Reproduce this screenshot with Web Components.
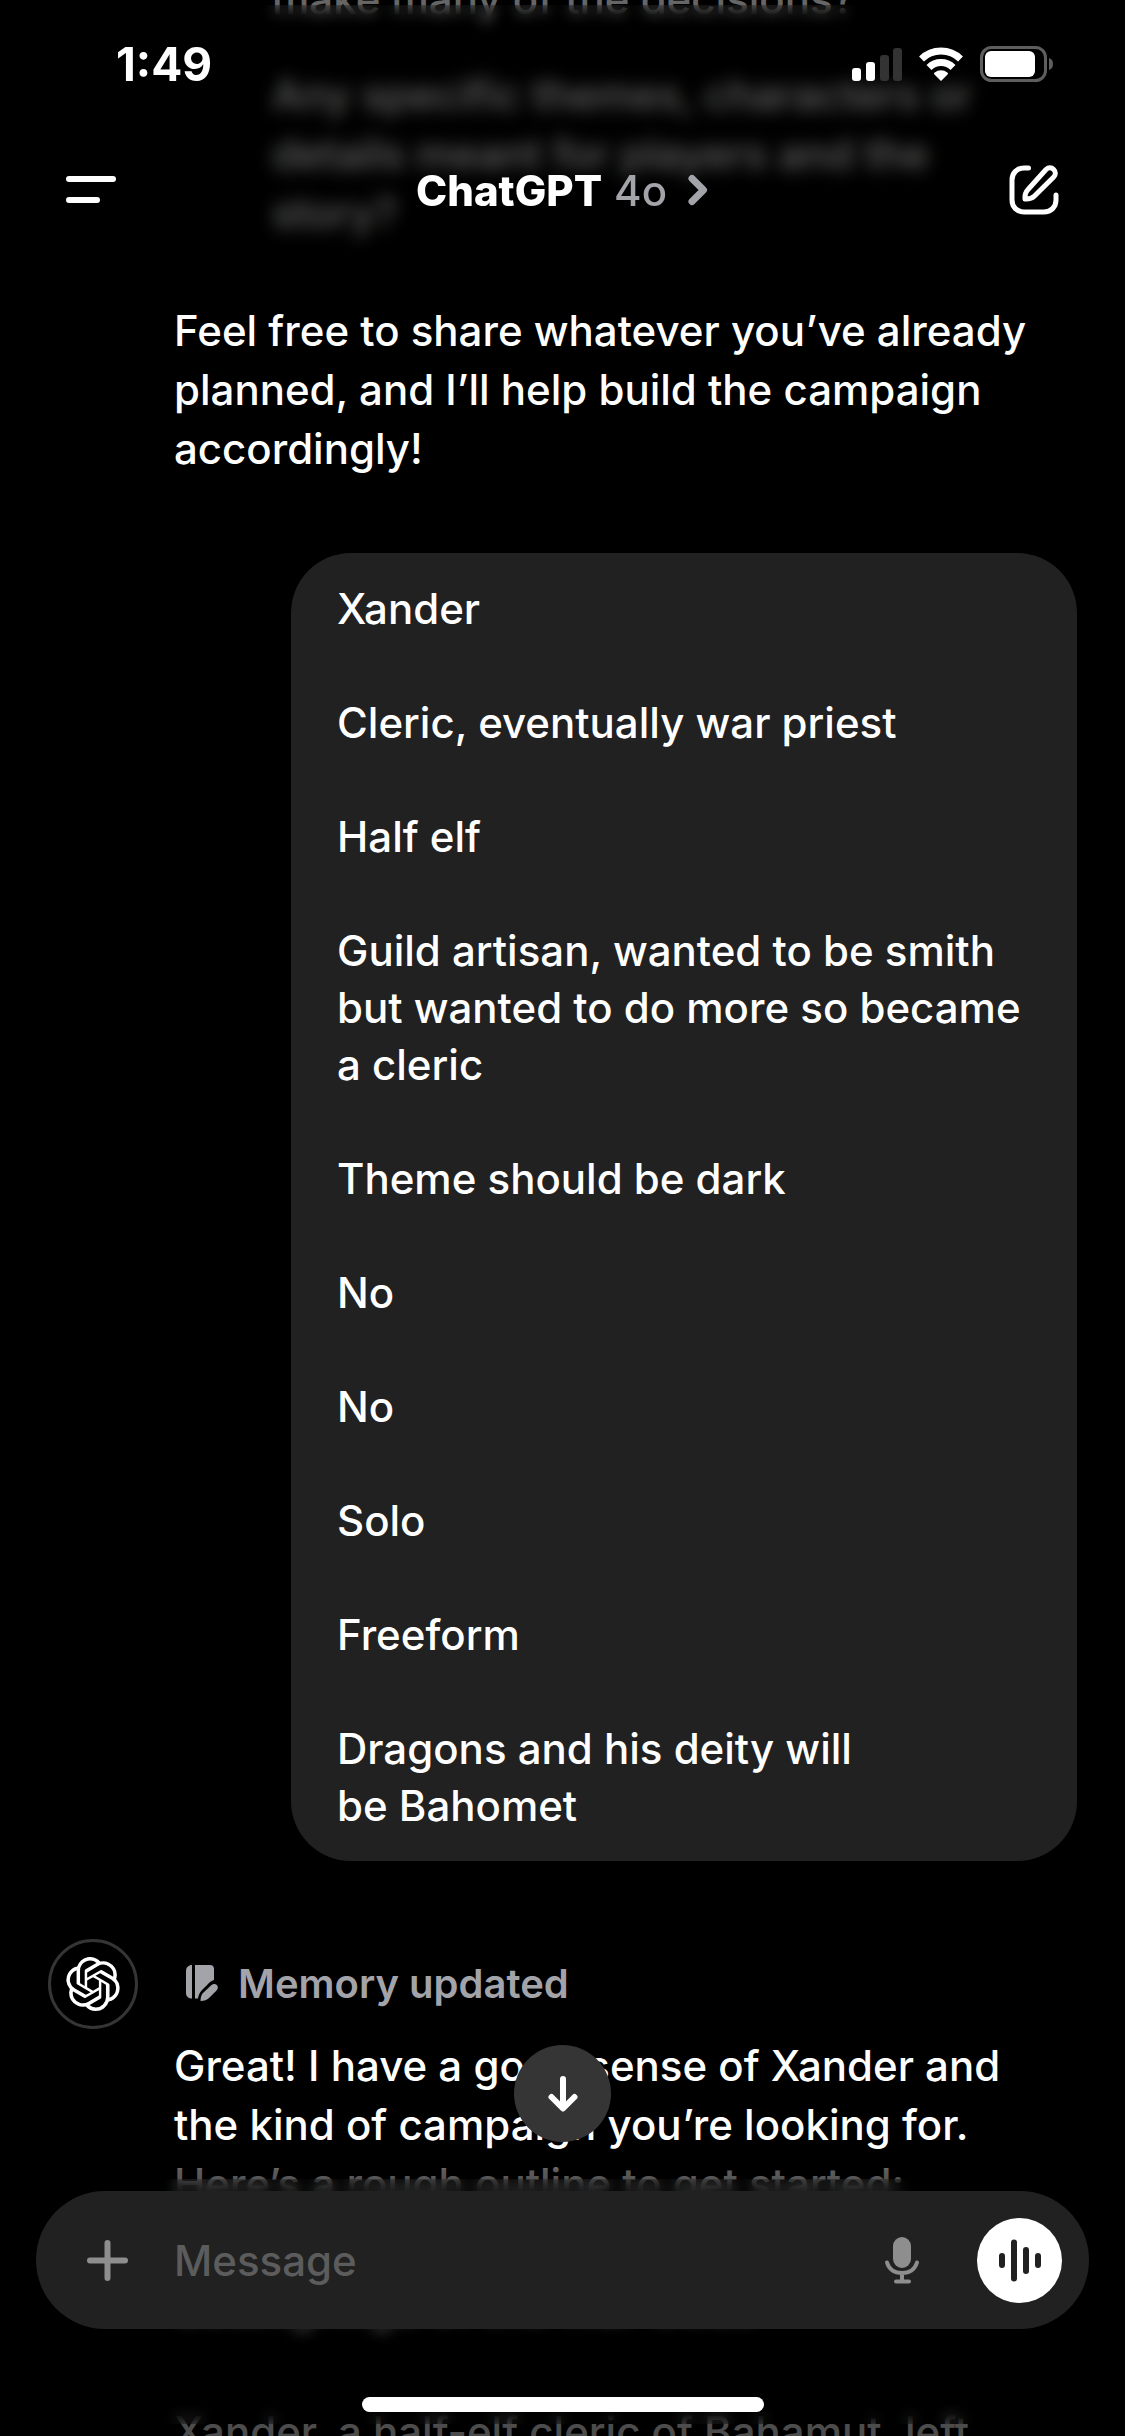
<!DOCTYPE html>
<html lang="en">
<head>
<meta charset="utf-8">
<meta name="viewport" content="width=device-width, initial-scale=1">
<title>ChatGPT</title>
<style>
  html, body { margin: 0; height: 100%; background: #000; }
  body {
    overflow: hidden;
    color: #fff;
    font: 500 42px/59px Inter, "Liberation Sans", sans-serif;
  }
</style>
</head>
<body>
<chat-app>
  <status-bar slot="top" time="1:49"></status-bar>
  <nav-bar slot="top" name="ChatGPT" model="4o"></nav-bar>

  <assistant-message>
    <question-list>
      <li>make many of the decisions?</li>
      <li>Any specific themes, characters or details meant for players and the story?</li>
    </question-list>
    <text-block>Feel free to share whatever you’ve already planned, and I’ll help build the campaign accordingly!</text-block>
  </assistant-message>

  <user-message>
    <p>Xander</p>
    <p>Cleric, eventually war priest</p>
    <p>Half elf</p>
    <p>Guild artisan, wanted to be smith but wanted to do more so became a&nbsp;cleric</p>
    <p>Theme should be dark</p>
    <p>No</p>
    <p>No</p>
    <p>Solo</p>
    <p>Freeform</p>
    <p>Dragons and his deity will <br>be Bahomet</p>
  </user-message>

  <assistant-message avatar>
    <memory-note slot="note">Memory updated</memory-note>
    <text-block>Great! I have a good sense of Xander and the kind of campaign you’re looking for. Here’s a rough outline to get started:</text-block>
    <text-block>Setting: Age of the War Gods</text-block>
    <text-block>Xander, a half-elf cleric of Bahamut, left</text-block>
  </assistant-message>

  <scroll-down slot="float"></scroll-down>
  <message-composer slot="bottom" placeholder="Message"></message-composer>
  <home-indicator slot="bottom"></home-indicator>
</chat-app>

<script>
const define = (name, render) => customElements.define(name, class extends HTMLElement {
  constructor() {
    super();
    this.attachShadow({ mode: 'open' });
  }
  connectedCallback() {
    this.shadowRoot.innerHTML = render(this);
  }
});

const buttonReset = `
  button { all: unset; box-sizing: border-box; display: grid; place-items: center; cursor: pointer; }
  button:focus-visible { outline: 4px solid #6aa8ff; }
  svg { display: block; }`;

define('chat-app', () => `
  <style>
    :host { display: block; position: relative; height: 100vh; overflow: hidden; background: #000; }
    main { display: flex; flex-direction: column; gap: 75px; margin-top: -31px; }
    header { position: absolute; inset: 0 0 auto; }
    footer { position: absolute; inset: auto 0 0; }
    .veil { position: absolute; inset: 0; background: rgba(0, 0, 0, .6); }
    footer .veil { background: linear-gradient(transparent, rgba(0, 0, 0, .64) 20px, rgba(0, 0, 0, .7) 40px); }
    .soft { position: absolute; inset: 5px 0 0; backdrop-filter: blur(7px); }
    .softer { position: absolute; inset: 60px 0 0; backdrop-filter: blur(6px); }
    footer .soft { inset: 29px 0 12px; }
    .bars { position: relative; }
    footer .bars { padding-top: 41px; }
    .float { position: absolute; z-index: 1; inset: auto 0 100%; display: flex; justify-content: center; padding-bottom: 8px; }
  </style>
  <main><slot></slot></main>
  <header><div class="soft"></div><div class="softer"></div><div class="veil"></div><div class="bars"><slot name="top"></slot></div></header>
  <footer><div class="soft"></div><div class="veil"></div><div class="float"><slot name="float"></slot></div><div class="bars"><slot name="bottom"></slot></div></footer>`);

define('status-bar', el => `
  <style>
    :host { display: flex; align-items: center; justify-content: space-between; height: 128px; padding: 0 72px 0 116px; }
    time { font-size: 46px; font-weight: 700; }
    .signs { display: flex; align-items: center; gap: 16px; }
    svg { display: block; }
  </style>
  <time>${el.getAttribute('time')}</time>
  <div class="signs">
    <svg width="52" height="34" viewBox="0 0 52 34" role="img" aria-label="Signal">
      <g fill="#fff"><rect x="2" y="21" width="9" height="13" rx="3"/><rect x="16" y="15" width="9" height="19" rx="3"/></g>
      <g fill="#333"><rect x="30" y="8" width="9" height="26" rx="3"/><rect x="43" y="1" width="9" height="33" rx="3"/></g>
    </svg>
    <svg width="46" height="34" viewBox="0 0 46 34" role="img" aria-label="Wi-Fi">
      <path fill="none" stroke="#fff" stroke-width="7" d="M3.500 12a28 28 0 0 1 39 0M11 20.500a17 17 0 0 1 24 0"/>
      <path fill="#fff" d="M23 34l-6.500-6.500c-.8-.8-.6-1.600.2-2.100a10.500 10.500 0 0 1 12.600 0c.8.5 1 1.300.2 2.100z"/>
    </svg>
    <svg width="73" height="36" viewBox="0 0 73 36" role="img" aria-label="Battery">
      <rect x="1.500" y="1.500" width="64" height="33" rx="10" fill="none" stroke="#5e5e5e" stroke-width="3"/>
      <rect x="5" y="5" width="50" height="26" rx="6" fill="#fff"/>
      <path d="M69 12c3 1 4 3 4 6s-1 5-4 6z" fill="#5e5e5e"/>
    </svg>
  </div>`);

define('nav-bar', el => `
  <style>
    ${buttonReset}
    :host { display: grid; grid-template-columns: 1fr auto 1fr; align-items: center; height: 124px; padding: 0 66px; }
    .menu { justify-self: start; }
    .title { display: flex; align-items: center; gap: 12px; font-weight: 800; }
    .title span { color: #a3a3aa; font-weight: 500; }
    .title svg { margin-left: 8px; }
    .new { justify-self: end; }
  </style>
  <button class="menu" aria-label="Menu">
    <svg width="50" height="30" viewBox="0 0 50 30" stroke="#fff" stroke-width="6" stroke-linecap="round"><path d="M3 4h44M3 25h28"/></svg>
  </button>
  <button class="title">${el.getAttribute('name')} <span>${el.getAttribute('model')}</span>
    <svg width="22" height="32" viewBox="0 0 22 32" fill="none" stroke="#a3a3aa" stroke-width="7" stroke-linecap="round" stroke-linejoin="round"><path d="M5 4.500L16.500 16 5 27.500"/></svg>
  </button>
  <button class="new" aria-label="New chat">
    <svg width="50" height="50" viewBox="0 0 50 50" fill="none" stroke="#fff" stroke-width="5" stroke-linecap="round" stroke-linejoin="round">
      <path d="M19.500 3H15C8 3 3 8 3 15v20c0 7 5 12 12 12h20c7 0 12-5 12-12v-5"/>
      <path d="M37 4.500c2.500-2.300 5.500-2.200 7.700 0s2.200 5.200 0 7.500L25.500 31c-2 2-5 3.300-9.500 3 -.3-4.500 1-7.500 3-9.500z"/>
    </svg>
  </button>`);

define('question-list', () => `
  <style>
    :host { display: block; padding: 0 40px 0 98px; }
    ul { display: flex; flex-direction: column; gap: 37px; margin: 0; padding: 0; list-style: none; }
  </style>
  <ul><slot></slot></ul>`);

define('text-block', () => `
  <style>:host { display: block; }</style>
  <slot></slot>`);

define('assistant-message', el => `
  <style>
    :host { display: grid; grid-template-columns: 90px minmax(0, 1fr); column-gap: 36px; padding: 0 72px 0 48px; }
    .avatar { display: grid; place-items: center; box-sizing: border-box; width: 90px; height: 90px; margin-top: 3px; border: 3px solid #353535; border-radius: 50%; }
    .body { display: flex; flex-direction: column; gap: 59px; grid-column: 2; }
    :host([avatar]) .note { box-sizing: border-box; height: 100px; padding-bottom: 6px; display: flex; align-items: center; }
    :host([avatar]) .body { gap: 65px; }
  </style>
  ${el.hasAttribute('avatar') ? `
  <div class="avatar">
    <svg width="54" height="54" viewBox="0 0 24 24" fill="#fff" role="img" aria-label="ChatGPT"><path d="M22.2819 9.8211a5.9847 5.9847 0 0 0-.5157-4.9108 6.0462 6.0462 0 0 0-6.5098-2.9A6.0651 6.0651 0 0 0 4.9807 4.1818a5.9847 5.9847 0 0 0-3.9977 2.9 6.0462 6.0462 0 0 0 .7427 7.0966 5.98 5.98 0 0 0 .511 4.9107 6.051 6.051 0 0 0 6.5146 2.9001A5.9847 5.9847 0 0 0 13.2599 24a6.0557 6.0557 0 0 0 5.7718-4.2058 5.9894 5.9894 0 0 0 3.9977-2.9001 6.0557 6.0557 0 0 0-.7475-7.0729zm-9.022 12.6081a4.4755 4.4755 0 0 1-2.8764-1.0408l.1419-.0804 4.7783-2.7582a.7948.7948 0 0 0 .3927-.6813v-6.7369l2.02 1.1686a.071.071 0 0 1 .038.052v5.5826a4.504 4.504 0 0 1-4.4945 4.4944zm-9.6607-4.1254a4.4708 4.4708 0 0 1-.5346-3.0137l.142.0852 4.783 2.7582a.7712.7712 0 0 0 .7806 0l5.8428-3.3685v2.3324a.0804.0804 0 0 1-.0332.0615L9.74 19.9502a4.4992 4.4992 0 0 1-6.1408-1.6464zM2.3408 7.8956a4.485 4.485 0 0 1 2.3655-1.9728V11.6a.7664.7664 0 0 0 .3879.6765l5.8144 3.3543-2.0201 1.1685a.0757.0757 0 0 1-.071 0l-4.8303-2.7865A4.504 4.504 0 0 1 2.3408 7.872zm16.5963 3.8558L13.1038 8.364 15.1192 7.2a.0757.0757 0 0 1 .071 0l4.8303 2.7913a4.4944 4.4944 0 0 1-.6765 8.1042v-5.6772a.79.79 0 0 0-.407-.667zm2.0107-3.0231l-.142-.0852-4.7735-2.7818a.7759.7759 0 0 0-.7854 0L9.409 9.2297V6.8974a.0662.0662 0 0 1 .0284-.0615l4.8303-2.7866a4.4992 4.4992 0 0 1 6.6802 4.66zM8.3065 12.863l-2.02-1.1638a.0804.0804 0 0 1-.038-.0567V6.0742a4.4992 4.4992 0 0 1 7.3757-3.4537l-.142.0805L8.704 5.459a.7948.7948 0 0 0-.3927.6813zm1.0976-2.3654l2.602-1.4998 2.6069 1.4998v2.9994l-2.5974 1.4997-2.6067-1.4997Z"/></svg>
  </div>
  <div class="note"><slot name="note"></slot></div>` : ''}
  <div class="body"><slot></slot></div>`);

define('user-message', () => `
  <style>
    :host { display: flex; flex-direction: column; gap: 57px; margin: 0 48px 0 291px; padding: 27px 46px; border-radius: 60px; background: #212121; line-height: 57px; }
    ::slotted(p) { margin: 0; }
  </style>
  <slot></slot>`);

define('memory-note', () => `
  <style>
    :host { display: flex; align-items: center; gap: 18px; padding-left: 12px; color: #a3a3aa; font-size: 40px; font-weight: 600; }
    svg { display: block; }
  </style>
  <svg width="34" height="36" viewBox="0 0 34 36" fill="#a3a3aa" aria-hidden="true">
    <path d="M6 0v33.500C2.500 33.500 0 31.500 0 28V6C0 2.500 2.500 0 6 0z"/>
    <path d="M9 0h15c2.500 0 4 1.500 4 4v11c-2 .5-3.500 1.500-5 3l-7 7c-2.500 2.500-3.500 5-4 8.500H9z"/>
    <path d="M25 20.500c2-2 4.300-2 5.800-.5s1.500 3.800-.5 5.800L23 33c-2 2-4.500 3-8.500 3 0-4 1-6.500 3-8.500z"/>
  </svg>
  <slot></slot>`);

define('scroll-down', () => `
  <style>
    ${buttonReset}
    :host { display: block; }
    button { width: 97px; height: 97px; border-radius: 50%; background: #353535; }
  </style>
  <button aria-label="Scroll to bottom">
    <svg width="36" height="40" viewBox="0 0 36 40" fill="none" stroke="#fff" stroke-width="6" stroke-linecap="round" stroke-linejoin="round"><path d="M18 5v29M6.500 23L18 34.500 29.500 23"/></svg>
  </button>`);

define('message-composer', el => `
  <style>
    ${buttonReset}
    :host { display: block; padding: 0 36px; }
    form { display: flex; align-items: center; box-sizing: border-box; height: 138px; margin: 0; padding: 0 27px 0 50px; border-radius: 69px; background: #212121; }
    input { flex: 1; min-width: 0; height: 59px; margin: 0 40px 0 45px; padding: 0; border: 0; outline: 0; background: none; color: #fff; font: inherit; }
    input::placeholder { color: #5c5c5c; opacity: 1; }
    .voice { width: 85px; height: 85px; margin-left: 57px; border-radius: 50%; background: #fff; }
  </style>
  <form>
    <button type="button" aria-label="Add">
      <svg width="43" height="43" viewBox="0 0 43 43" stroke="#8e8e8e" stroke-width="6" stroke-linecap="round"><path d="M21.500 4v35M4 21.500h35"/></svg>
    </button>
    <input type="text" aria-label="Message" placeholder="${el.getAttribute('placeholder')}">
    <button type="button" aria-label="Dictate">
      <svg width="36" height="48" viewBox="0 0 36 48" fill="none" stroke="#8e8e8e" stroke-width="4" stroke-linecap="round">
        <rect x="9" y="1" width="18" height="31" rx="9" fill="#8e8e8e" stroke="none"/>
        <path d="M3 26.500C5 33 10.500 37 18 37s13-4 15-10.500M18 38v6M12 45.500h13"/>
      </svg>
    </button>
    <button type="button" class="voice" aria-label="Voice mode">
      <svg width="44" height="44" viewBox="0 0 44 44" stroke="#212121" stroke-width="6" stroke-linecap="round"><path d="M4 18v9M16 4.500v36M28 12v21M40 18v9"/></svg>
    </button>
  </form>`);

define('home-indicator', () => `
  <style>
    :host { display: flex; justify-content: center; padding: 68px 0 24px; }
    div { width: 402px; height: 15px; border-radius: 8px; background: #fff; }
  </style>
  <div></div>`);
</script>
</body>
</html>
